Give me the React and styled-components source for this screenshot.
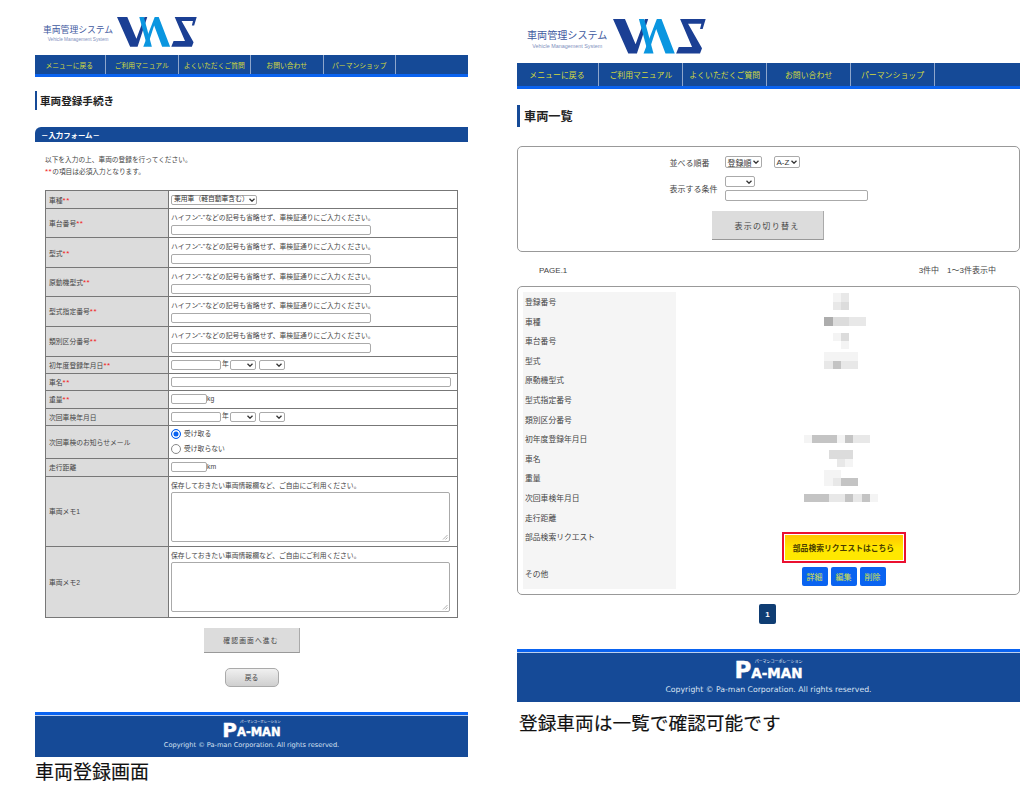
import React from "react";
import styled, { createGlobalStyle } from "styled-components";

const FONT = `"Liberation Sans", "Noto Sans CJK JP", sans-serif`;
const NAV_ITEMS = ["メニューに戻る", "ご利用マニュアル", "よくいただくご質問", "お問い合わせ", "パーマンショップ"];
const HINT = `ハイフン"-"などの記号も省略せず、車検証通りにご入力ください。`;
const MEMO = "保存しておきたい車両情報欄など、ご自由にご利用ください。";

const Global = createGlobalStyle`
  html, body {
    margin: 0;
    background: #fff;
    font-family: ${FONT};
    color: #444;
  }
`;

const Page = styled.div`
  width: 1024px;
  height: 794px;
  overflow: hidden;
  display: grid;
  grid-template-columns: 433px 503px;
  column-gap: 49px;
  padding-left: 35px;
  box-sizing: border-box;
`;

const Column = styled.div`
  display: flex;
  flex-direction: column;
`;

const Header = styled.div`
  display: flex;
  align-items: flex-start;
  height: ${(p) => p.$h}px;
  padding: ${(p) => p.$top}px 0 0 ${(p) => p.$left}px;
  box-sizing: border-box;
`;

const LogoText = styled.div`
  display: flex;
  flex-direction: column;
  align-items: center;
  margin-top: ${(p) => p.$top}px;
  margin-right: ${(p) => p.$gap}px;
`;

const LogoTitle = styled.div`
  font-size: ${(p) => p.$size}px;
  line-height: 1.2;
  color: #3f5aa0;
  white-space: nowrap;
`;

const LogoSub = styled.div`
  font-size: ${(p) => p.$size}px;
  line-height: 1.3;
  margin-top: 1px;
  color: #7f90bd;
  white-space: nowrap;
`;

const Nav = styled.nav`
  display: flex;
  height: ${(p) => p.$h}px;
  background: #154a97;
  border-bottom: ${(p) => p.$line}px solid #0a63f0;
`;

const NavItem = styled.div`
  width: ${(p) => p.$w}px;
  display: flex;
  align-items: center;
  justify-content: center;
  border-right: 1px solid #8ea6cc;
  color: #d4dc3c;
  font-size: ${(p) => p.$size}px;
  white-space: nowrap;
  &:first-child {
    margin-left: -1.5px;
  }
`;

const Title = styled.h1`
  margin: ${(p) => p.$top}px 0 0;
  height: ${(p) => p.$h}px;
  display: flex;
  align-items: center;
  border-left: ${(p) => p.$bar}px solid #154a97;
  padding-left: ${(p) => p.$pad}px;
  font-size: ${(p) => p.$size}px;
  font-weight: 700;
  color: #222;
`;

const SectionBar = styled.div`
  margin-top: 17px;
  height: 15px;
  background: #154a97;
  border-top-left-radius: 6px;
  display: flex;
  align-items: center;
  padding-left: 6px;
  color: #fff;
  font-size: 7.4px;
  font-weight: 700;
`;

const Intro = styled.div`
  margin: 12px 0 0 10px;
  font-size: 6.7px;
  line-height: 12px;
`;

const Req = styled.span`
  color: #f01c24;
  font-size: 8px;
  letter-spacing: 0.5px;
`;

const FormTable = styled.table`
  margin: 12px 0 0 10px;
  width: 413px;
  table-layout: fixed;
  border-collapse: collapse;
  font-size: 6.8px;
`;

const Label = styled.th`
  width: 123px;
  background: #dcdcdc;
  border: 1px solid #777;
  padding: 0 0 0 3px;
  text-align: left;
  font-weight: 400;
  box-sizing: border-box;
`;

const Cell = styled.td`
  border: 1px solid #777;
  padding: 0 0 0 2px;
  box-sizing: border-box;
  height: ${(p) => p.$h}px;
  line-height: 1;
`;

const Inline = styled.div`
  display: flex;
  align-items: center;
  gap: ${(p) => p.$gap || 0}px;
`;

const Hint = styled.div`
  line-height: 11px;
  margin-bottom: 2px;
`;

const MemoHint = styled(Hint)`
  line-height: 10px;
  margin-bottom: 1px;
`;

const TextBox = styled.div`
  width: ${(p) => p.$w}px;
  height: ${(p) => p.$h || 10}px;
  box-sizing: border-box;
  border: 1px solid #aaa;
  border-radius: 2px;
  background: #fff;
  flex: none;
`;

const Memo = styled(TextBox)`
  position: relative;
`;

const Grip = styled.svg`
  position: absolute;
  right: 1px;
  bottom: 1px;
`;

const Select = styled.div`
  width: ${(p) => p.$w}px;
  height: ${(p) => p.$h || 11}px;
  box-sizing: border-box;
  border: 1px solid #aaa;
  border-radius: 2px;
  background: #fff;
  display: flex;
  align-items: center;
  justify-content: space-between;
  padding: 0 2px;
  font-size: ${(p) => p.$size || 6.8}px;
  white-space: nowrap;
  flex: none;
  color: #333;
`;

const Chevron = styled.svg`
  margin-left: auto;
  flex: none;
`;

const YearMark = styled.span`
  margin: 0 1px;
`;

const Radio = styled.span`
  width: 10px;
  height: 10px;
  box-sizing: border-box;
  border-radius: 50%;
  border: ${(p) => (p.$on ? "1px solid #0a63f0" : "1px solid #888")};
  background: ${(p) => (p.$on ? "#0a63f0" : "#fff")};
  box-shadow: ${(p) => (p.$on ? "inset 0 0 0 1.5px #fff" : "none")};
  flex: none;
`;

const RadioStack = styled.div`
  display: flex;
  flex-direction: column;
  gap: 5px;
`;

const Actions = styled.div`
  display: flex;
  flex-direction: column;
  align-items: center;
  margin-top: 10px;
`;

const GreyButton = styled.div`
  margin-top: ${(p) => p.$top || 0}px;
  width: ${(p) => p.$w}px;
  height: ${(p) => p.$h}px;
  background: #dcdcdc;
  border-right: 1px solid #aaa;
  border-bottom: 1px solid #999;
  box-sizing: border-box;
  display: flex;
  align-items: center;
  justify-content: center;
  font-size: ${(p) => p.$size}px;
  letter-spacing: ${(p) => p.$track}px;
  color: #444;
`;

const BackButton = styled.div`
  margin-top: 15px;
  width: 54px;
  height: 19px;
  box-sizing: border-box;
  border: 1px solid #aaa;
  border-radius: 5px;
  background: linear-gradient(#f0f0f0, #cfcfcf);
  display: flex;
  align-items: center;
  justify-content: center;
  font-size: 6.8px;
`;

const Footer = styled.footer`
  margin-top: ${(p) => p.$top}px;
  height: ${(p) => p.$h}px;
  box-sizing: border-box;
  background: #154a97;
  border-top: 3px solid #0a63f0;
  box-shadow: inset 0 1px 0 #bcd0ee;
  display: flex;
  flex-direction: column;
  align-items: center;
  color: #d8e2f2;
`;

const PaMan = styled.div`
  position: relative;
  margin-top: ${(p) => p.$top}px;
  height: ${(p) => p.$h}px;
  display: flex;
  align-items: flex-end;
  color: #fff;
  font-family: "DejaVu Sans", ${FONT};
  font-weight: 700;
  line-height: 1;
  -webkit-text-stroke: 0.4px #fff;
`;

const PaBig = styled.span`
  font-size: ${(p) => p.$size}px;
  line-height: 0.8;
`;

const PaRest = styled.span`
  font-size: ${(p) => p.$size}px;
  line-height: 0.85;
`;

const PaKana = styled.span`
  position: absolute;
  top: 0;
  right: 0;
  font-size: ${(p) => p.$size}px;
  font-family: ${FONT};
  font-weight: 400;
  white-space: nowrap;
  -webkit-text-stroke: 0;
`;

const Copyright = styled.div`
  margin-top: ${(p) => p.$top}px;
  font-size: ${(p) => p.$size}px;
  line-height: 1.2;
  font-family: "DejaVu Sans", sans-serif;
`;

const Caption = styled.div`
  margin: ${(p) => p.$top}px 0 0 ${(p) => p.$left}px;
  font-size: ${(p) => p.$size}px;
  line-height: 24px;
  color: #111;
  white-space: nowrap;
  -webkit-text-stroke: 0.15px #111;
`;

const Box = styled.div`
  border: 1px solid #999;
  border-radius: 5px;
  box-sizing: border-box;
`;

const FilterBox = styled(Box)`
  margin-top: 19px;
  height: 106px;
  display: flex;
  flex-direction: column;
  align-items: center;
  padding: 9px 2px 0 0;
  font-size: 8px;
`;

const FilterGrid = styled.div`
  width: 196px;
  display: grid;
  grid-template-columns: 55px 1fr;
  row-gap: 8px;
  align-items: center;
`;

const FilterStack = styled.div`
  display: flex;
  flex-direction: column;
  gap: 3px;
`;

const PageInfo = styled.div`
  display: flex;
  justify-content: space-between;
  padding: 0 24px 0 22px;
  margin-top: 14px;
  height: 20px;
  font-size: 8px;
  line-height: 10px;
`;

const ListBox = styled(Box)`
  height: 309px;
  padding: 5px;
  font-size: 7.8px;
`;

const ListRow = styled.div`
  display: grid;
  grid-template-columns: 153px 1fr;
  height: ${(p) => p.$h}px;
`;

const ListLabel = styled.div`
  background: #f5f5f5;
  padding: 6px 0 0 2px;
  line-height: 10px;
  box-sizing: border-box;
`;

const ListValue = styled.div`
  display: flex;
  flex-direction: column;
  align-items: center;
  justify-content: ${(p) => p.$align || "center"};
  padding-right: 8px;
`;

const Mosaic = styled.div`
  display: grid;
  grid-template-columns: repeat(${(p) => p.$cols}, 8.33px);
  grid-auto-rows: 8.33px;
`;

const Pixel = styled.span`
  background: ${(p) => p.$c};
`;

const RequestButton = styled.div`
  margin: 5px 0 0 5px;
  width: 124px;
  height: 31px;
  box-sizing: border-box;
  border: 2.5px solid #ea1030;
  outline: 1px solid #fff;
  outline-offset: -3.5px;
  background: linear-gradient(#ffc400, #ffe800 55%);
  display: flex;
  align-items: center;
  justify-content: center;
  font-size: 7.8px;
  font-weight: 700;
  color: #4a3a00;
`;

const SmallButtons = styled.div`
  display: flex;
  gap: 3px;
  margin: 3px 0 0 5px;
`;

const SmallButton = styled.div`
  width: 26px;
  height: 19px;
  border-radius: 2px;
  background: #0a63f0;
  color: #d8e24a;
  font-size: 8px;
  display: flex;
  align-items: center;
  justify-content: center;
`;

const Pager = styled.div`
  display: flex;
  justify-content: center;
  margin-top: 9px;
  padding-right: 2px;
`;

const PagerItem = styled.div`
  width: 17px;
  height: 20px;
  border-radius: 2px;
  background: #0f3d73;
  color: #fff;
  font-size: 8px;
  font-weight: 700;
  display: flex;
  align-items: center;
  justify-content: center;
`;

function VmsLogo({ width, height }) {
  return (
    <svg width={width} height={height} viewBox="0 0 280 105">
      <polygon points="0,0 36,0 68,76 96,0 106,0 72,104 46,104" fill="#1b3f94" />
      <polygon points="78,0 94,0 122,104 106,104" fill="#0a96e0" />
      <polygon points="92,104 132,0 146,0 186,104 158,104 130,30 106,104" fill="#0a96e0" />
      <polygon points="202,0 279,0 270,30 262,30 266,14 226,14 268,88 262,104 190,104 198,84 238,84" fill="#1b3f94" />
    </svg>
  );
}

function LogoMark({ titleSize, subSize, top, gap, width, height, h, pt, left }) {
  return (
    <Header $h={h} $top={pt} $left={left}>
      <LogoText $top={top} $gap={gap}>
        <LogoTitle $size={titleSize}>車両管理システム</LogoTitle>
        <LogoSub $size={subSize}>Vehicle Management System</LogoSub>
      </LogoText>
      <VmsLogo width={width} height={height} />
    </Header>
  );
}

function Drop({ w, h, size, children }) {
  return (
    <Select $w={w} $h={h} $size={size}>
      {children}
      <Chevron width="6" height="4" viewBox="0 0 6 4">
        <path d="M0.5 0.7 L3 3.2 L5.5 0.7" fill="none" stroke="#333" strokeWidth="1.3" />
      </Chevron>
    </Select>
  );
}

function DateFields() {
  return (
    <Inline>
      <TextBox $w={50} $h={10} />
      <YearMark>年</YearMark>
      <Inline $gap={3}>
        <Drop w={26} h={10} />
        <Drop w={26} h={10} />
      </Inline>
    </Inline>
  );
}

function MemoBox() {
  return (
    <Memo $w={279} $h={50}>
      <Grip width="6" height="6" viewBox="0 0 6 6">
        <path d="M1 5.5 L5.5 1 M3.5 5.5 L5.5 3.5" stroke="#999" strokeWidth="0.8" />
      </Grip>
    </Memo>
  );
}

function Footers({ top, h, logoTop, logoH, pSize, restSize, kanaSize, copyTop, copySize }) {
  return (
    <Footer $top={top} $h={h}>
      <PaMan $top={logoTop} $h={logoH}>
        <PaBig $size={pSize}>P</PaBig>
        <PaRest $size={restSize}>A-MAN</PaRest>
        <PaKana $size={kanaSize}>パーマンコーポレーション</PaKana>
      </PaMan>
      <Copyright $top={copyTop} $size={copySize}>
        Copyright © Pa-man Corporation. All rights reserved.
      </Copyright>
    </Footer>
  );
}

const a = "#f4f4f4";
const b = "#e8e8e8";
const c = "#dcdcdc";
const d = "#c4c4c4";
const e = "#adadad";
const w = "transparent";

const LIST = [
  { label: "登録番号", cols: 2, px: [a, b, b, c] },
  { label: "車種", cols: 6, px: [w, e, c, c, b, b] },
  { label: "車台番号", cols: 2, px: [a, c, w, a] },
  { label: "型式", cols: 4, px: [a, a, a, a, b, d, b, b] },
  { label: "原動機型式" },
  { label: "型式指定番号" },
  { label: "類別区分番号" },
  { label: "初年度登録年月日", cols: 9, px: [a, d, d, d, a, d, b, b, w] },
  { label: "車名", cols: 3, px: [c, c, c, w, b, a] },
  { label: "重量", cols: 4, px: [a, a, w, w, a, b, d, d] },
  { label: "次回車検年月日", cols: 9, px: [d, d, d, b, b, d, b, d, a] },
  { label: "走行距離" },
];

const HINT_ROWS = [
  ["車台番号", 29],
  ["型式", 30],
  ["原動機型式", 29],
  ["型式指定番号", 29.5],
  ["類別区分番号", 30],
];

export default function App() {
  return (
    <Page>
      <Global />
      <Column>
        <LogoMark titleSize={8.8} subSize={4.7} top={8} gap={4} width={80} height={30} h={55} pt={17} left={8} />
        <Nav $h={19} $line={3}>
          {NAV_ITEMS.map((item) => (
            <NavItem key={item} $w={71.5} $size={6.8}>
              {item}
            </NavItem>
          ))}
        </Nav>
        <Title $top={14} $h={19} $bar={2} $pad={3} $size={10.6}>
          車両登録手続き
        </Title>
        <SectionBar>－入力フォーム－</SectionBar>
        <Intro>
          以下を入力の上、車両の登録を行ってください。
          <br />
          <Req>**</Req>の項目は必須入力となります。
        </Intro>
        <FormTable>
          <tbody>
            <tr>
              <Label>車種<Req>**</Req></Label>
              <Cell $h={18}>
                <Drop w={86} h={10}>乗用車（軽自動車含む）</Drop>
              </Cell>
            </tr>
            {HINT_ROWS.map(([t, h]) => (
              <tr key={t}>
                <Label>{t}<Req>**</Req></Label>
                <Cell $h={h}>
                  <Hint>{HINT}</Hint>
                  <TextBox $w={200} $h={10} />
                </Cell>
              </tr>
            ))}
            <tr>
              <Label>初年度登録年月日<Req>**</Req></Label>
              <Cell $h={17}>
                <DateFields />
              </Cell>
            </tr>
            <tr>
              <Label>車名<Req>**</Req></Label>
              <Cell $h={17}>
                <TextBox $w={280} $h={10} />
              </Cell>
            </tr>
            <tr>
              <Label>重量<Req>**</Req></Label>
              <Cell $h={18}>
                <Inline>
                  <TextBox $w={36} $h={10} />
                  <span>kg</span>
                </Inline>
              </Cell>
            </tr>
            <tr>
              <Label>次回車検年月日</Label>
              <Cell $h={17}>
                <DateFields />
              </Cell>
            </tr>
            <tr>
              <Label>次回車検のお知らせメール</Label>
              <Cell $h={33}>
                <RadioStack>
                  <Inline $gap={3}><Radio $on />受け取る</Inline>
                  <Inline $gap={3}><Radio />受け取らない</Inline>
                </RadioStack>
              </Cell>
            </tr>
            <tr>
              <Label>走行距離</Label>
              <Cell $h={18}>
                <Inline>
                  <TextBox $w={36} $h={10} />
                  <span>km</span>
                </Inline>
              </Cell>
            </tr>
            <tr>
              <Label>車両メモ1</Label>
              <Cell $h={70.5}>
                <MemoHint>{MEMO}</MemoHint>
                <MemoBox />
              </Cell>
            </tr>
            <tr>
              <Label>車両メモ2</Label>
              <Cell $h={70.5}>
                <MemoHint>{MEMO}</MemoHint>
                <MemoBox />
              </Cell>
            </tr>
          </tbody>
        </FormTable>
        <Actions>
          <GreyButton $w={96} $h={25} $size={6.8} $track={1.1}>確認画面へ進む</GreyButton>
          <BackButton>戻る</BackButton>
        </Actions>
        <Footers top={25} h={45} logoTop={6} logoH={17} pSize={20} restSize={11.5} kanaSize={3.4} copyTop={4} copySize={6.6} />
        <Caption $top={4} $left={0} $size={19}>車両登録画面</Caption>
      </Column>
      <Column>
        <LogoMark titleSize={10.1} subSize={5.4} top={11} gap={6} width={93} height={35} h={63} pt={19} left={10} />
        <Nav $h={23} $line={3}>
          {NAV_ITEMS.map((item) => (
            <NavItem key={item} $w={82.9} $size={7.9}>
              {item}
            </NavItem>
          ))}
        </Nav>
        <Title $top={16} $h={22} $bar={3} $pad={4} $size={12.2}>
          車両一覧
        </Title>
        <FilterBox>
          <FilterGrid>
            <span>並べる順番</span>
            <Inline $gap={12}>
              <Drop w={37} h={12} size={8}>登録順</Drop>
              <Drop w={26} h={12} size={8}>A-Z</Drop>
            </Inline>
            <span>表示する条件</span>
            <FilterStack>
              <Drop w={30} h={11} />
              <TextBox $w={143} $h={11} />
            </FilterStack>
          </FilterGrid>
          <GreyButton $w={112} $h={29} $size={8} $track={1.3} $top={10}>
            表示の切り替え
          </GreyButton>
        </FilterBox>
        <PageInfo>
          <span>PAGE.1</span>
          <span>3件中　1～3件表示中</span>
        </PageInfo>
        <ListBox>
          {LIST.map((row) => (
            <ListRow key={row.label} $h={19.6}>
              <ListLabel>{row.label}</ListLabel>
              <ListValue>
                {row.cols && (
                  <Mosaic $cols={row.cols}>
                    {row.px.map((col, i) => (
                      <Pixel key={i} $c={col} />
                    ))}
                  </Mosaic>
                )}
              </ListValue>
            </ListRow>
          ))}
          <ListRow $h={37}>
            <ListLabel>部品検索リクエスト</ListLabel>
            <ListValue $align="flex-start">
              <RequestButton>部品検索リクエストはこちら</RequestButton>
            </ListValue>
          </ListRow>
          <ListRow $h={24.5}>
            <ListLabel>その他</ListLabel>
            <ListValue $align="flex-start">
              <SmallButtons>
                <SmallButton>詳細</SmallButton>
                <SmallButton>編集</SmallButton>
                <SmallButton>削除</SmallButton>
              </SmallButtons>
            </ListValue>
          </ListRow>
        </ListBox>
        <Pager>
          <PagerItem>1</PagerItem>
        </Pager>
        <Footers top={25} h={53} logoTop={8} logoH={19} pSize={23} restSize={13.5} kanaSize={4} copyTop={6} copySize={7.75} />
        <Caption $top={10} $left={2} $size={18.7}>登録車両は一覧で確認可能です</Caption>
      </Column>
    </Page>
  );
}
